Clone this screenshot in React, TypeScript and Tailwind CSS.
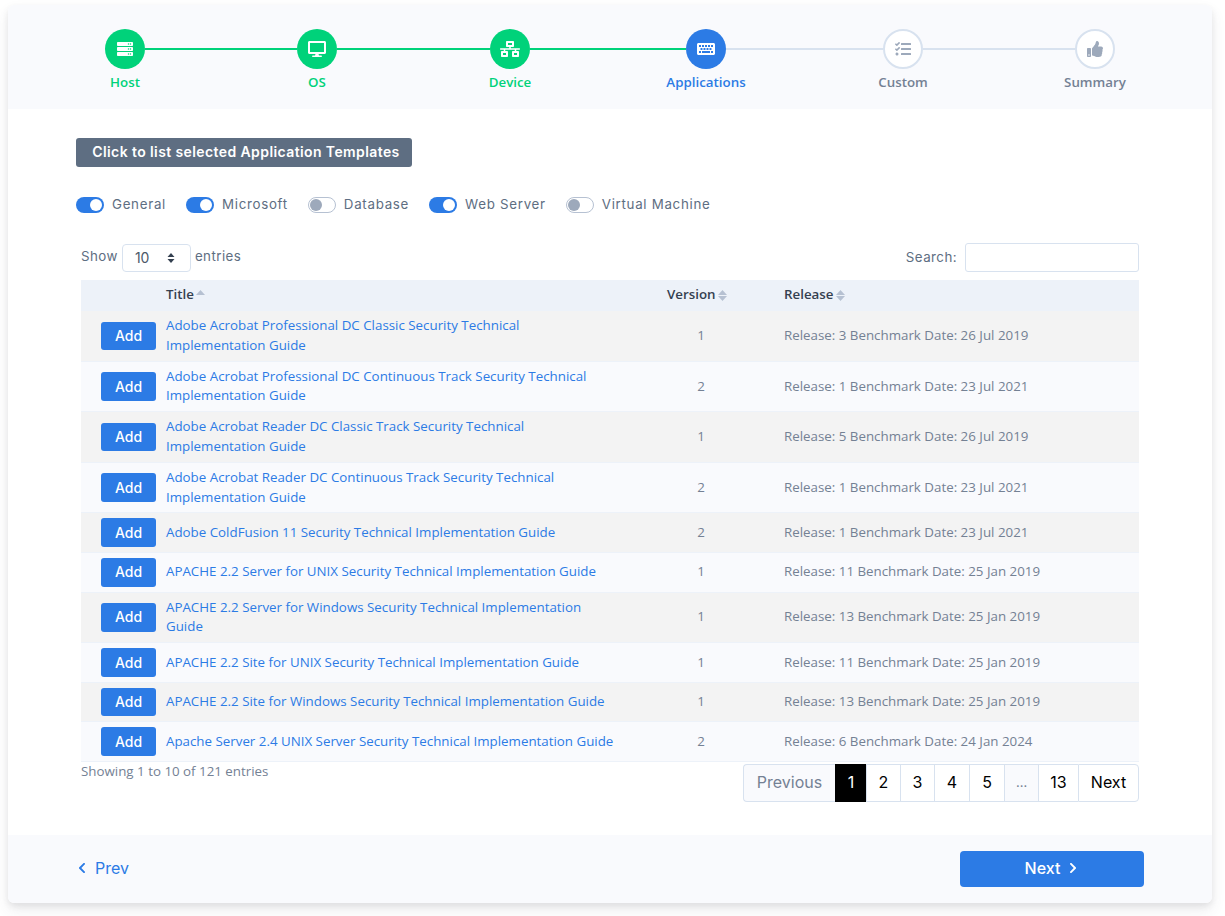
import { FaServer, FaDesktop, FaNetworkWired, FaKeyboard, FaTasks, FaThumbsUp, FaChevronLeft, FaChevronRight } from 'react-icons/fa'
import type { IconType } from 'react-icons'

const poppins = "font-['Inter','Liberation_Sans',sans-serif]"

const steps: { label: string; icon: IconType; size: number; state: 'done' | 'active' | 'todo'; gap?: string }[] = [
  { label: 'Host', icon: FaServer, size: 16, state: 'done', gap: 'w-[152px]' },
  { label: 'OS', icon: FaDesktop, size: 18, state: 'done', gap: 'w-[153px]' },
  { label: 'Device', icon: FaNetworkWired, size: 20, state: 'done', gap: 'w-[156px]' },
  { label: 'Applications', icon: FaKeyboard, size: 18, state: 'active', gap: 'w-[157px]' },
  { label: 'Custom', icon: FaTasks, size: 16, state: 'todo', gap: 'w-[152px]' },
  { label: 'Summary', icon: FaThumbsUp, size: 16, state: 'todo' },
]

const filters = [
  { label: 'General', on: true },
  { label: 'Microsoft', on: true },
  { label: 'Database', on: false },
  { label: 'Web Server', on: true },
  { label: 'Virtual Machine', on: false },
]

const rows = [
  { title: 'Adobe Acrobat Professional DC Classic Security Technical Implementation Guide', version: 1, release: 'Release: 3 Benchmark Date: 26 Jul 2019' },
  { title: 'Adobe Acrobat Professional DC Continuous Track Security Technical Implementation Guide', version: 2, release: 'Release: 1 Benchmark Date: 23 Jul 2021' },
  { title: 'Adobe Acrobat Reader DC Classic Track Security Technical Implementation Guide', version: 1, release: 'Release: 5 Benchmark Date: 26 Jul 2019' },
  { title: 'Adobe Acrobat Reader DC Continuous Track Security Technical Implementation Guide', version: 2, release: 'Release: 1 Benchmark Date: 23 Jul 2021' },
  { title: 'Adobe ColdFusion 11 Security Technical Implementation Guide', version: 2, release: 'Release: 1 Benchmark Date: 23 Jul 2021' },
  { title: 'APACHE 2.2 Server for UNIX Security Technical Implementation Guide', version: 1, release: 'Release: 11 Benchmark Date: 25 Jan 2019' },
  { title: 'APACHE 2.2 Server for Windows Security Technical Implementation Guide', version: 1, release: 'Release: 13 Benchmark Date: 25 Jan 2019' },
  { title: 'APACHE 2.2 Site for UNIX Security Technical Implementation Guide', version: 1, release: 'Release: 11 Benchmark Date: 25 Jan 2019' },
  { title: 'APACHE 2.2 Site for Windows Security Technical Implementation Guide', version: 1, release: 'Release: 13 Benchmark Date: 25 Jan 2019' },
  { title: 'Apache Server 2.4 UNIX Server Security Technical Implementation Guide', version: 2, release: 'Release: 6 Benchmark Date: 24 Jan 2024' },
]

const pages = [
  { label: 'Previous', w: 'w-[92px]', cls: 'bg-[#f9fafd] text-[#748194] rounded-l-[4px]' },
  { label: '1', w: 'w-[31px]', cls: 'bg-black text-white border-black' },
  { label: '2', w: 'w-[34px]', cls: 'bg-white text-black' },
  { label: '3', w: 'w-[34px]', cls: 'bg-white text-black' },
  { label: '4', w: 'w-[35px]', cls: 'bg-white text-black' },
  { label: '5', w: 'w-[35px]', cls: 'bg-white text-black' },
  { label: '…', w: 'w-[34px]', cls: 'bg-[#f9fafd] text-[#748194] text-[13px]' },
  { label: '13', w: 'w-[40px]', cls: 'bg-white text-black' },
  { label: 'Next', w: 'w-[61px]', cls: 'bg-white text-black border-r rounded-r-[4px]' },
]

function SortIcon({ up = true }: { up?: boolean }) {
  return (
    <svg width="11" height="13" viewBox="0 0 11 13" className="ml-[1px] shrink-0">
      <path d="M5.5 1 10 6H1z" fill="#b6c1d2" />
      {up ? null : <path d="M5.5 12 1 7h9z" fill="#b6c1d2" />}
    </svg>
  )
}

function Toggle({ on }: { on: boolean }) {
  return (
    <span
      className={
        on
          ? 'flex h-4 w-7 items-center justify-end rounded-full bg-[#2c7be5] px-[2px]'
          : 'flex h-4 w-7 items-center justify-start rounded-full border border-[#b6c1d2] bg-white px-[1px]'
      }
    >
      <span className={on ? 'h-3 w-3 rounded-full bg-white' : 'h-3 w-3 rounded-full bg-[#9da9bb]'} />
    </span>
  )
}

export default function App() {
  return (
    <div className="min-h-[916px] bg-white pl-2 pr-[13px] pt-[5px] font-['Open_Sans',sans-serif]">
      <div className="overflow-hidden rounded-[6px] bg-white shadow-[0_7px_14px_0_rgba(65,69,88,0.1),0_3px_6px_0_rgba(0,0,0,0.07)]">
        {/* wizard steps */}
        <div className="flex h-[104px] items-start bg-[#f9fafd] pl-[97px] pt-[24px]">
          {steps.map((step) => {
            const Icon = step.icon
            return (
              <div key={step.label} className="flex items-start">
                <div className="flex w-10 flex-col items-center">
                  <div
                    className={
                      step.state === 'done'
                        ? 'flex h-10 w-10 items-center justify-center rounded-full bg-[#00d27a] text-white'
                        : step.state === 'active'
                          ? 'flex h-10 w-10 items-center justify-center rounded-full bg-[#2c7be5] text-white'
                          : 'flex h-10 w-10 items-center justify-center rounded-full border-2 border-[#d8e2ef] bg-white text-[#9da9bb]'
                    }
                  >
                    <Icon size={step.size} />
                  </div>
                  <span
                    className={
                      step.state === 'done'
                        ? 'mt-[3px] whitespace-nowrap text-[13.33px] font-[550] leading-[20px] text-[#00d27a]'
                        : step.state === 'active'
                          ? 'mt-[3px] whitespace-nowrap text-[13.33px] font-[550] leading-[20px] text-[#2c7be5]'
                          : 'mt-[3px] whitespace-nowrap text-[13.33px] font-[550] leading-[20px] text-[#748194]'
                    }
                  >
                    {step.label}
                  </span>
                </div>
                {step.gap && (
                  <div className={`${step.gap} mt-[19px] h-[2px] ${step.state === 'done' ? 'bg-[#00d27a]' : 'bg-[#d8e2ef]'}`} />
                )}
              </div>
            )
          })}
        </div>

        {/* body */}
        <div className="h-[726px] bg-white px-[68px] pt-[29px]">
          <button className={`${poppins} block h-[29px] w-[336px] rounded-[3px] bg-[#5e6e82] pb-[2px] pl-1 text-center text-[14px] font-semibold tracking-[0.4px] text-white`}>
            Click to list selected Application Templates
          </button>

          <div className={`${poppins} mt-[30px] flex h-4 items-center text-[13.33px] tracking-[0.7px] text-[#5e6e82]`}>
            {filters.map((f) => (
              <div key={f.label} className="mr-[20px] flex items-center gap-[8px]">
                <Toggle on={f.on} />
                <span>{f.label}</span>
              </div>
            ))}
          </div>

          <div className="px-[5px]">
            <div className={`${poppins} mt-[30px] flex h-[29px] items-center justify-between text-[13.33px] tracking-[0.45px] text-[#5e6e82]`}>
              <div className="flex items-center gap-[4px]">
                <span className="pb-[2px]">Show</span>
                <div className="flex h-[28px] w-[69px] items-center justify-between rounded-[4px] border border-[#d8e2ef] bg-white pl-[12px] pr-[15px] text-[14px] tracking-normal text-[#4d5969]">
                  <span>10</span>
                  <svg width="8" height="10" viewBox="0 0 8 10">
                    <path d="M4 0 7.5 4H.5zM4 10 .5 6h7z" fill="#344050" />
                  </svg>
                </div>
                <span className="pb-[2px]">entries</span>
              </div>
              <div className="flex items-center gap-[8px]">
                <span>Search:</span>
                <div className="h-[29px] w-[174px] rounded-[3px] border border-[#d8e2ef] bg-white" />
              </div>
            </div>

            <table className="mt-[8px] w-[1058px] table-fixed border-collapse border-b border-[#d8e2ef] text-[13.33px] leading-[19.75px]">
              <colgroup>
                <col className="w-[75px]" />
                <col className="w-[501px]" />
                <col className="w-[88px]" />
                <col />
              </colgroup>
              <thead>
                <tr className="h-[31px] bg-[#edf2f9] text-left text-[13.33px] text-[#344050]">
                  <th />
                  <th className="pb-[1px] pl-[10px] font-semibold">
                    <span className="flex items-center">Title<SortIcon /></span>
                  </th>
                  <th className="pb-[1px] pl-[10px] font-semibold">
                    <span className="flex items-center">Version<SortIcon up={false} /></span>
                  </th>
                  <th className="pb-[1px] pl-[39px] font-semibold">
                    <span className="flex items-center">Release<SortIcon up={false} /></span>
                  </th>
                </tr>
              </thead>
              <tbody>
                {rows.map((row, i) => (
                  <tr key={row.title} className={i % 2 === 0 ? 'bg-[#f3f3f3]' : 'bg-[#f9fafd]'}>
                    <td className="border-b border-[#edf2f9] py-[5.05px] pl-[20px]">
                      <button className={`${poppins} block h-[28.5px] w-[55px] rounded-[3px] bg-[#2c7be5] text-center text-[14px] font-medium text-white`}>
                        Add
                      </button>
                    </td>
                    <td className="border-b border-[#edf2f9] py-[5.05px] pl-[10px]">
                      <a className="block max-w-[450px] text-[#2c7be5]">{row.title}</a>
                    </td>
                    <td className="border-b border-[#edf2f9] py-[5.05px] text-center text-[#748194]">{row.version}</td>
                    <td className="border-b border-[#edf2f9] py-[5.05px] pl-[39px] text-[#748194]">{row.release}</td>
                  </tr>
                ))}
              </tbody>
            </table>

            <div className="flex items-start justify-between">
              <div className="text-[13.33px] leading-[18px] text-[#748194]">Showing 1 to 10 of 121 entries</div>
              <div className={`${poppins} mt-[2px] flex h-[38px] text-[16px]`}>
                {pages.map((p) => (
                  <div
                    key={p.label}
                    className={`${p.w} ${p.cls} flex items-center justify-center border-y border-l border-[#d8e2ef] pb-[1px]`}
                  >
                    {p.label}
                  </div>
                ))}
              </div>
            </div>
          </div>
        </div>

        {/* footer */}
        <div className="flex h-[68px] items-center justify-between bg-[#f9fafd] pl-[68px] pr-[68px]">
          <a className={`${poppins} flex items-center gap-[7px] pb-[2px] text-[16px] text-[#2c7be5]`}>
            <FaChevronLeft className="text-[12px]" />
            Prev
          </a>
          <button className={`${poppins} flex h-[36px] w-[184px] items-center justify-center gap-[7px] rounded-[4px] bg-[#2c7be5] pb-[2px] text-[16px] font-medium text-white`}>
            Next
            <FaChevronRight className="text-[12px]" />
          </button>
        </div>
      </div>
    </div>
  )
}
